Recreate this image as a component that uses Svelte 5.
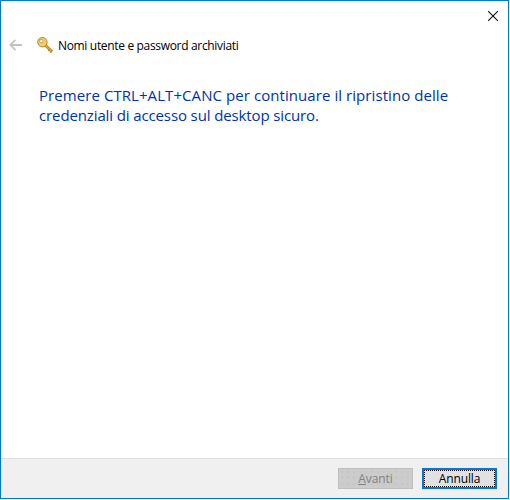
<script>
  let title = "Nomi utente e password archiviati";
</script>

<div class="window">
  <div class="titlebar">
    <button class="close" type="button" aria-label="Chiudi">
      <svg width="10" height="10" viewBox="0 0 10 10">
        <path d="M0 0L10 10M10 0L0 10" stroke="#111" stroke-width="1.1" fill="none" />
      </svg>
    </button>
  </div>

  <div class="header">
    <svg class="back" width="13" height="12" viewBox="0 0 13 12">
      <path d="M6.5 0.8L1.4 6L6.5 11.2M1.4 6H13" stroke="#c4c4c4" stroke-width="1.8" fill="none" />
    </svg>
    <svg class="key" width="17" height="17" viewBox="0 0 17 17">
      <path d="M7 7L15.2 14.6" stroke="#c4872a" stroke-width="2.8" fill="none" />
      <path d="M7 7L15.2 14.6" stroke="#f0b64a" stroke-width="1" fill="none" />
      <path d="M12.6 12.4L11 14M14.6 14.2L13.2 15.6" stroke="#c4872a" stroke-width="1.4" fill="none" />
      <circle cx="5.4" cy="5.2" r="4.7" fill="#f1d06c" stroke="#b98421" />
      <circle cx="4.4" cy="4.2" r="1.8" fill="#fff8e2" stroke="#a9782a" stroke-width="0.6" />
    </svg>
    <span class="title">{title}</span>
  </div>

  <main class="content">
    <p>
      <span class="line first">Premere CTRL+ALT+CANC per continuare il ripristino delle</span>
      <span class="line second">credenziali di accesso sul desktop sicuro.</span>
    </p>
  </main>

  <div class="footer">
    <button class="btn disabled" type="button" disabled><u>A</u>vanti</button>
    <button class="btn default" type="button">Annulla</button>
  </div>
</div>

<style>
  :global(body) {
    background: #fff;
  }

  .window {
    box-sizing: border-box;
    width: 509px;
    height: 499px;
    border: 1px solid #0078d7;
    display: flex;
    flex-direction: column;
    background: #fff;
    font-family: "Open Sans", "Noto Sans", sans-serif;
    color: #000;
  }

  .titlebar {
    height: 30px;
    display: flex;
    justify-content: flex-end;
    flex: none;
  }

  .close {
    width: 30px;
    height: 30px;
    padding: 0;
    border: 0;
    background: none;
    display: flex;
    align-items: center;
    justify-content: center;
  }

  .header {
    height: 28px;
    flex: none;
    display: flex;
    align-items: center;
    padding-left: 8px;
  }

  .back {
    margin-right: 15px;
  }

  .key {
    margin-right: 4px;
  }

  .title {
    font-size: 12px;
    letter-spacing: -0.33px;
  }

  .content {
    flex: 1;
    padding: 26px 0 0 38px;
  }

  .content p {
    margin: 0;
    font-size: 15px;
    line-height: 20px;
    color: #0033a5;
  }

  .line {
    display: block;
    white-space: nowrap;
  }

  /* Open Sans caps run narrow and lowercase wide next to the original font */
  .first {
    letter-spacing: 0.07px;
  }

  .second {
    letter-spacing: -0.12px;
  }

  .footer {
    height: 40px;
    flex: none;
    box-sizing: border-box;
    background: #f0f0f0;
    border-top: 1px solid #dfdfdf;
    display: flex;
    align-items: center;
    justify-content: flex-end;
    gap: 9px;
    padding-right: 11px;
  }

  .btn {
    box-sizing: border-box;
    width: 75px;
    height: 21px;
    padding: 0;
    font-family: inherit;
    font-size: 12px;
    letter-spacing: -0.1px;
    line-height: 1;
  }

  .disabled {
    background-color: #ccc;
    background-image: radial-gradient(#bdbdbd 0.6px, transparent 0.8px);
    background-size: 6px 6px;
    border: 1px solid #bfbfbf;
    color: #838383;
  }

  .default {
    background: #e1e1e1;
    border: 2px solid #0078d7;
    color: #000;
    outline: 1px dotted #000;
    outline-offset: -3px;
  }
</style>
